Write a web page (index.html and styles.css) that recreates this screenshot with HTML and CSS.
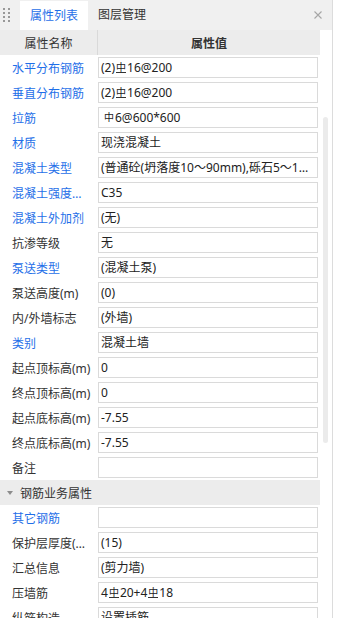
FILE: index.html
```html
<!DOCTYPE html>
<html lang="zh-CN">
<head>
<meta charset="utf-8">
<title>属性列表</title>
<link rel="stylesheet" href="styles.css">
</head>
<body>
<div class="panel">
  <div class="tabs">
    <div class="grip">
      <svg width="7" height="14" viewBox="0 0 7 14"><g fill="#999"><rect x="0" y="0" width="2" height="2"/><rect x="5" y="0" width="2" height="2"/><rect x="0" y="4" width="2" height="2"/><rect x="5" y="4" width="2" height="2"/><rect x="0" y="8" width="2" height="2"/><rect x="5" y="8" width="2" height="2"/><rect x="0" y="12" width="2" height="2"/><rect x="5" y="12" width="2" height="2"/></g></svg>
    </div>
    <div class="tab tab-active">属性列表</div>
    <div class="tab">图层管理</div>
    <div class="close">
      <svg width="8" height="8" viewBox="0 0 8 8"><path d="M0.5 0.5 L7.5 7.5 M7.5 0.5 L0.5 7.5" stroke="#a6a6a6" stroke-width="1.1" fill="none"/></svg>
    </div>
  </div>
  <div class="main">
    <div class="grid">
      <div class="head">
        <div class="head-name">属性名称</div>
        <div class="head-value">属性值</div>
      </div>
      <div class="row"><div class="label blue">水平分布钢筋</div><div class="value">(2)<span class="r3">中</span>16@200</div></div>
      <div class="row"><div class="label blue">垂直分布钢筋</div><div class="value">(2)<span class="r3">中</span>16@200</div></div>
      <div class="row"><div class="label blue">拉筋</div><div class="value"><span class="r1">中</span>6@600*600</div></div>
      <div class="row"><div class="label blue">材质</div><div class="value">现浇混凝土</div></div>
      <div class="row"><div class="label blue">混凝土类型</div><div class="value">(普通砼(坍落度10～90mm),砾石5～10mm)</div></div>
      <div class="row"><div class="label blue">混凝土强度等级</div><div class="value">C35</div></div>
      <div class="row"><div class="label blue">混凝土外加剂</div><div class="value">(无)</div></div>
      <div class="row"><div class="label">抗渗等级</div><div class="value">无</div></div>
      <div class="row"><div class="label blue">泵送类型</div><div class="value">(混凝土泵)</div></div>
      <div class="row"><div class="label">泵送高度(m)</div><div class="value">(0)</div></div>
      <div class="row"><div class="label">内/外墙标志</div><div class="value">(外墙)</div></div>
      <div class="row"><div class="label blue">类别</div><div class="value">混凝土墙</div></div>
      <div class="row"><div class="label">起点顶标高(m)</div><div class="value">0</div></div>
      <div class="row"><div class="label">终点顶标高(m)</div><div class="value">0</div></div>
      <div class="row"><div class="label">起点底标高(m)</div><div class="value">-7.55</div></div>
      <div class="row"><div class="label">终点底标高(m)</div><div class="value">-7.55</div></div>
      <div class="row"><div class="label">备注</div><div class="value"></div></div>
      <div class="section"><span class="caret"></span>钢筋业务属性</div>
      <div class="row"><div class="label blue">其它钢筋</div><div class="value"></div></div>
      <div class="row"><div class="label">保护层厚度(mm)</div><div class="value">(15)</div></div>
      <div class="row"><div class="label">汇总信息</div><div class="value">(剪力墙)</div></div>
      <div class="row"><div class="label">压墙筋</div><div class="value">4<span class="r3">中</span>20+4<span class="r3">中</span>18</div></div>
      <div class="row"><div class="label">纵筋构造</div><div class="value">设置插筋</div></div>
    </div>
    <div class="gutter"><div class="thumb"></div></div>
  </div>
</div>
</body>
</html>
```

FILE: styles.css
```css
html, body {
  margin: 0;
  padding: 0;
}
body {
  width: 337px;
  height: 618px;
  overflow: hidden;
  background: #ffffff;
  font-family: "Noto Sans", "Noto Sans CJK SC", sans-serif;
  font-size: 12px;
  color: #333333;
}
.panel {
  width: 332px;
  border-right: 1px solid #dcdcdc;
  height: 640px;
}
.tabs {
  height: 30px;
  background: #f0f0f0;
  display: flex;
  align-items: stretch;
}
.grip {
  width: 20px;
  box-sizing: border-box;
  padding-left: 3px;
  padding-top: 8px;
}
.grip svg {
  display: block;
}
.tab {
  padding: 0 10px;
  display: flex;
  align-items: center;
  line-height: 1;
  color: #333333;
  font-size: 12px;
}
.tab-active {
  width: 68px;
  box-sizing: border-box;
  justify-content: center;
  margin-top: 1px;
  background: #ffffff;
  color: #1f6fe8;
}
.close {
  margin-left: auto;
  padding: 11px 10px 0 0;
}
.close svg {
  display: block;
}
.main {
  display: flex;
}
.grid {
  width: 320px;
}
.gutter {
  width: 12px;
}
.thumb {
  margin: 87px 0 0 3px;
  width: 5px;
  height: 326px;
  border-radius: 3px;
  background: #ebebeb;
}
.head {
  display: flex;
  height: 25px;
  background: #ececec;
}
.head-name {
  width: 97px;
  border-right: 1px solid #d9d9d9;
  display: flex;
  align-items: center;
  justify-content: center;
}
.head-value {
  flex: 1;
  display: flex;
  align-items: center;
  justify-content: center;
  font-weight: bold;
}
.row {
  display: flex;
  align-items: center;
  height: 25px;
}
.label {
  width: 98px;
  box-sizing: border-box;
  padding: 0 6px 0 12px;
  white-space: nowrap;
  overflow: hidden;
  text-overflow: ellipsis;
  color: #333333;
}
.label.blue {
  color: #1f6fe8;
}
.value {
  width: 220px;
  height: 21px;
  box-sizing: border-box;
  border: 1px solid #dadada;
  padding: 0 3px 0 2px;
  line-height: 19px;
  white-space: nowrap;
  overflow: hidden;
  text-overflow: ellipsis;
  color: #222222;
}
.r3, .r1 {
  display: inline-block;
  font-size: 10px;
  line-height: 9px;
  margin: 0 1px;
  vertical-align: 1px;
}
.r1 {
  margin-left: 3px;
}
.r3 {
  border-bottom: 1px solid #333333;
}
.section {
  height: 25px;
  background: #ececec;
  display: flex;
  align-items: center;
  padding-left: 7px;
  color: #333333;
}
.caret {
  width: 0;
  height: 0;
  border-left: 3px solid transparent;
  border-right: 3px solid transparent;
  border-top: 4px solid #8c8c8c;
  margin-right: 7px;
}
```
